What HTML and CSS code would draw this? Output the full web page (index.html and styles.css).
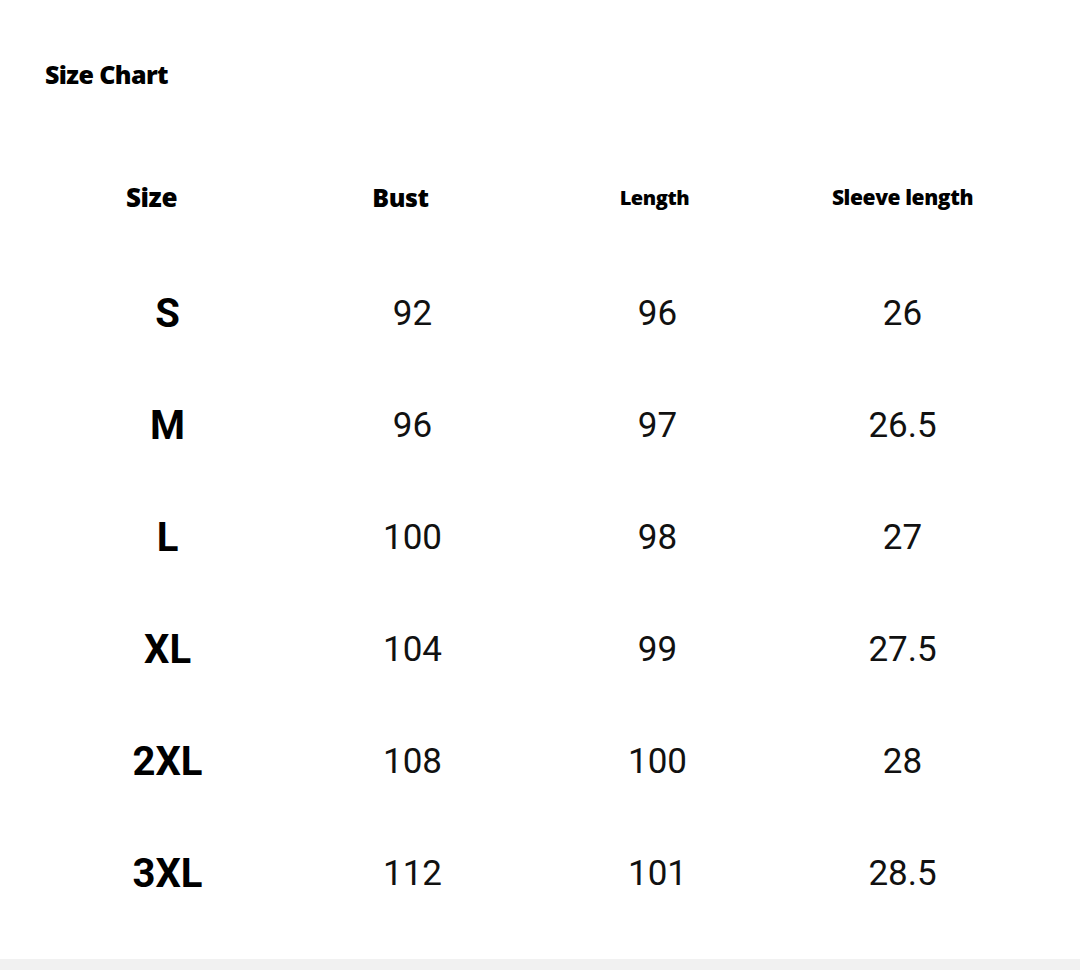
FILE: index.html
```html
<!DOCTYPE html>
<html>
<head>
<meta charset="utf-8">
<link rel="stylesheet" href="styles.css">
</head>
<body>
<div class="page">
  <h1 class="title">Size Chart</h1>
  <div class="chart-head">
    <div class="head h-size">Size</div>
    <div class="head h-bust">Bust</div>
    <div class="head h-len">Length</div>
    <div class="head h-sleeve">Sleeve length</div>
  </div>
  <div class="chart-body">
    <div class="size">S</div><div class="val">92</div><div class="val">96</div><div class="val">26</div>
    <div class="size">M</div><div class="val">96</div><div class="val">97</div><div class="val">26.5</div>
    <div class="size">L</div><div class="val">100</div><div class="val">98</div><div class="val">27</div>
    <div class="size">XL</div><div class="val">104</div><div class="val">99</div><div class="val">27.5</div>
    <div class="size">2XL</div><div class="val">108</div><div class="val">100</div><div class="val">28</div>
    <div class="size">3XL</div><div class="val">112</div><div class="val">101</div><div class="val">28.5</div>
  </div>
</div>
<div class="footer-strip"></div>
</body>
</html>
```

FILE: styles.css
```css
html, body {
  margin: 0;
  padding: 0;
  background: #ffffff;
}
.page {
  height: 959px;
  box-sizing: border-box;
  padding-left: 45px;
  color: #000;
}
.title {
  margin: 0;
  padding-top: 57px;
  height: 34px;
  line-height: 34px;
  font-family: "Open Sans", sans-serif;
  font-weight: 800;
  font-size: 25px;
  letter-spacing: -0.6px;
}
.chart-head,
.chart-body {
  display: grid;
  grid-template-columns: repeat(4, 245px);
}
.chart-head {
  margin-top: 81px;
  grid-template-rows: 50px;
}
.chart-body {
  margin-top: 35px;
  grid-template-rows: repeat(6, 112px);
}
.chart-head > div,
.chart-body > div {
  display: flex;
  align-items: center;
  justify-content: center;
}
.head {
  font-family: "Open Sans", sans-serif;
  font-weight: 800;
  letter-spacing: -0.4px;
}
.h-size { font-size: 26px; padding-right: 32px; }
.h-bust { font-size: 25px; padding-right: 24px; }
.h-len { font-size: 20px; padding-right: 6px; }
.h-sleeve { font-size: 21px; }
.size {
  font-family: Roboto, sans-serif;
  font-weight: 700;
  font-size: 40px;
}
.val {
  font-family: Roboto, sans-serif;
  font-weight: 400;
  font-size: 35px;
  color: #111;
}
.footer-strip {
  height: 11px;
  background: #f1f1f1;
}
```
